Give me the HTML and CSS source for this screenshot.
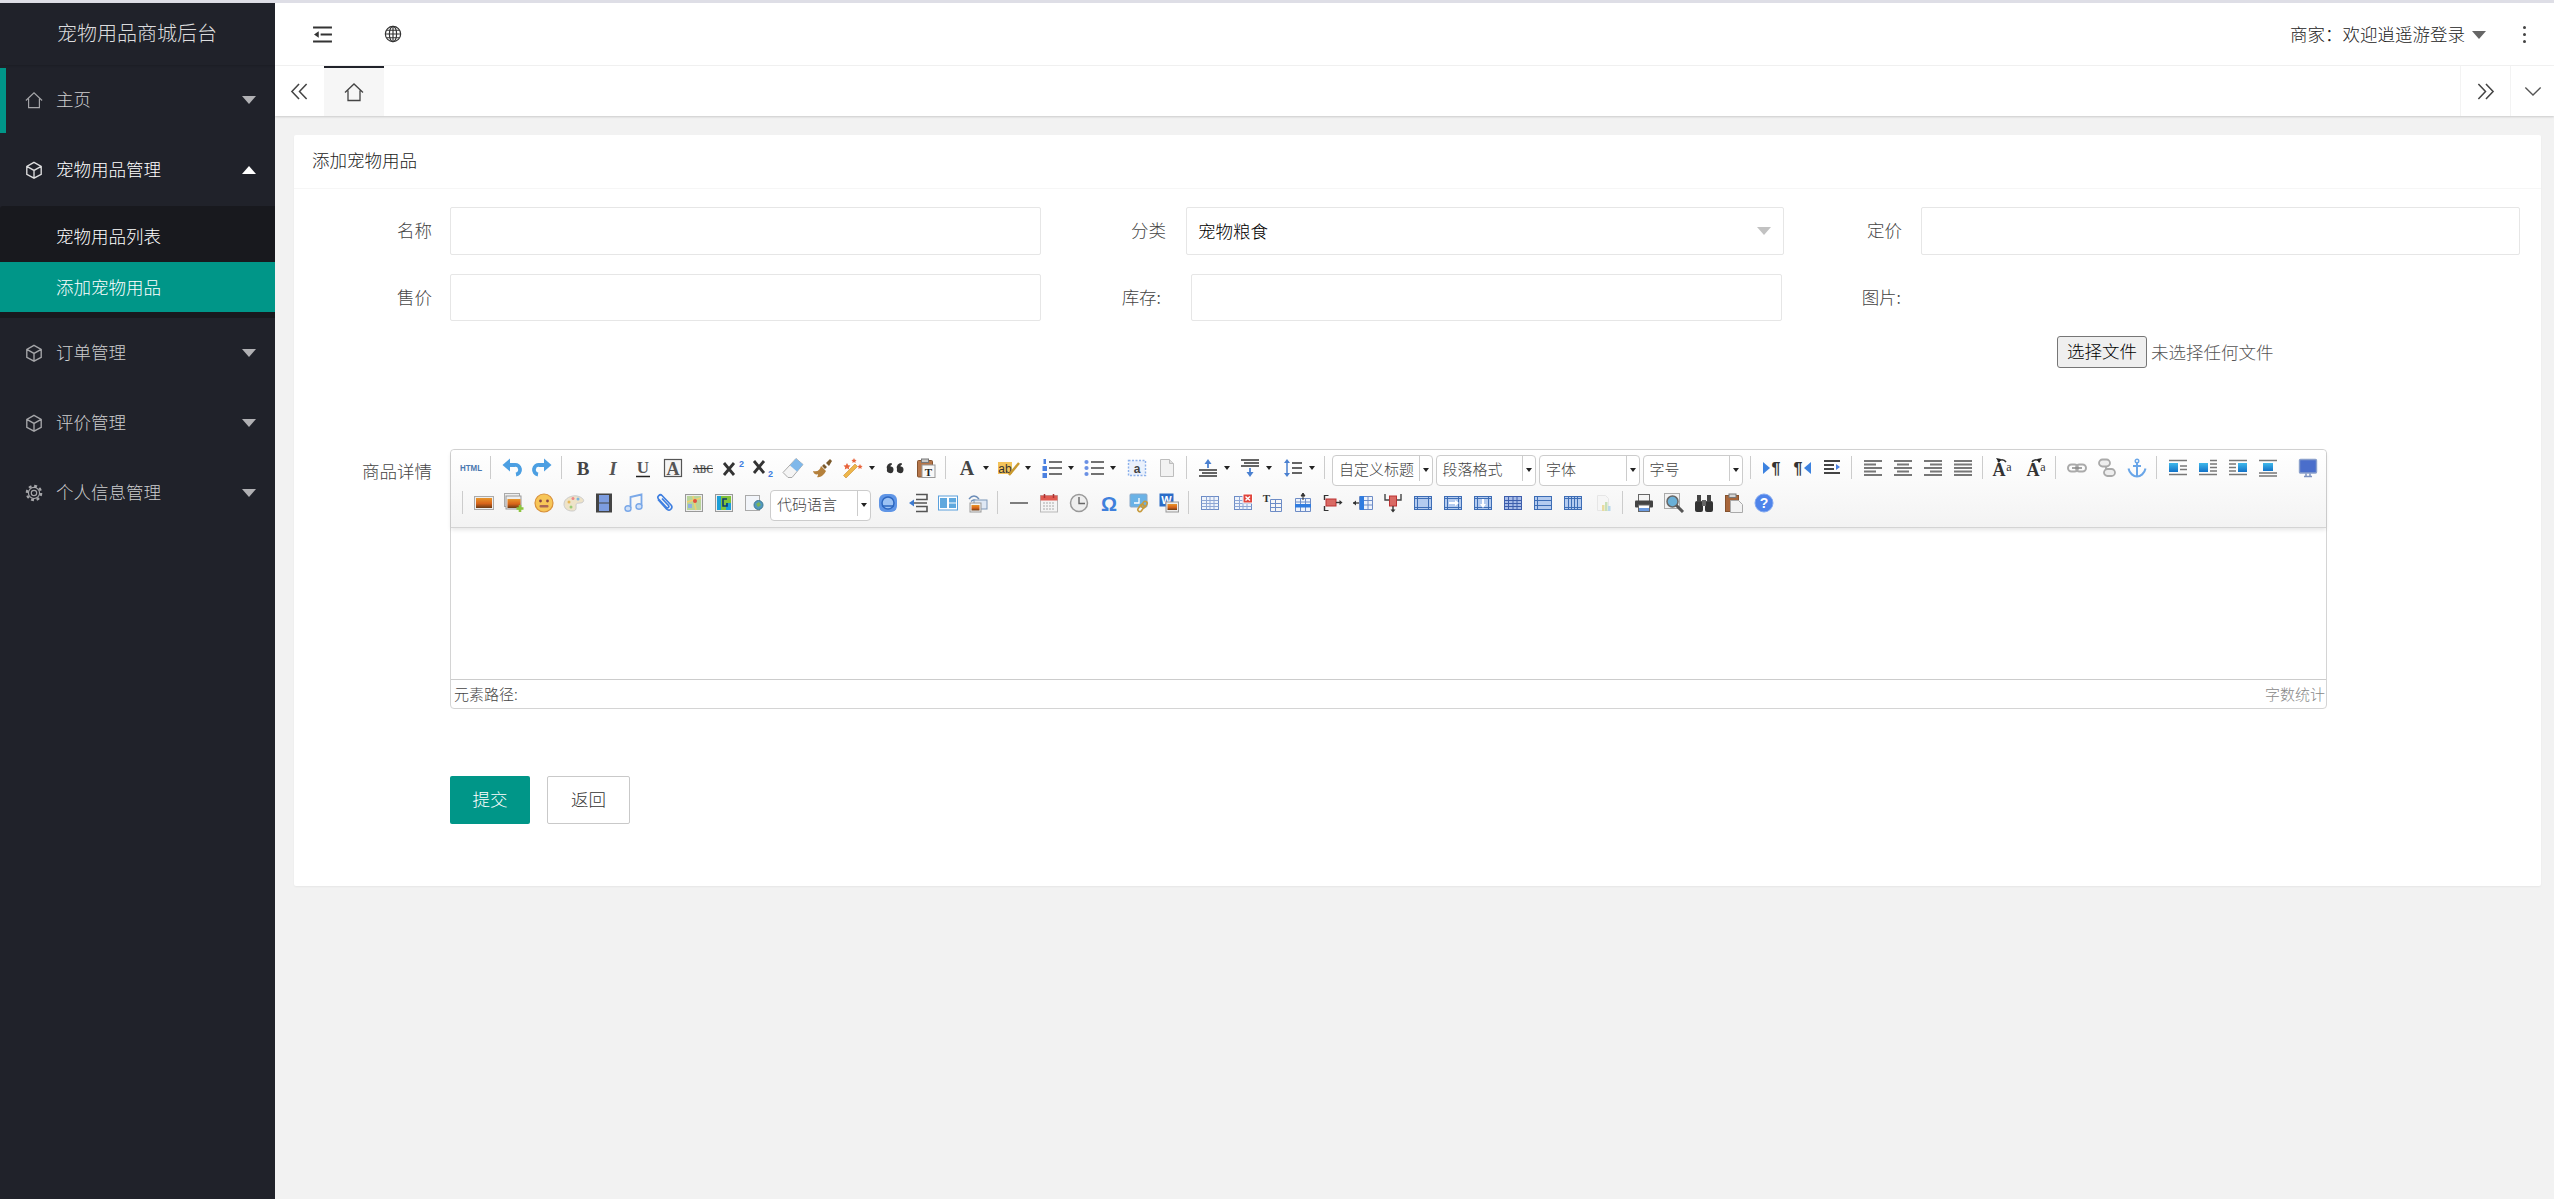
FILE: index.html
```html
<!DOCTYPE html>
<html lang="zh-CN">
<head>
<meta charset="utf-8">
<title>宠物用品商城后台</title>
<link rel="stylesheet" href="styles.css">
</head>
<body>
<svg class="sprite" xmlns="http://www.w3.org/2000/svg">
<defs>
<linearGradient id="sun" x1="0" y1="0" x2="0" y2="1"><stop offset="0" stop-color="#e8962a"/><stop offset=".55" stop-color="#d8641a"/><stop offset="1" stop-color="#6a3a14"/></linearGradient>
<linearGradient id="sky" x1="0" y1="0" x2="0" y2="1"><stop offset="0" stop-color="#3fb8ea"/><stop offset="1" stop-color="#1272c8"/></linearGradient>
<g id="gr"><rect x="1.5" y="3.5" width="17" height="13" fill="#eef3fb" stroke="#6d8cc6"/><path d="M1.5 7.5h17M1.5 10.500h17M1.5 13.500h17M6.500 3.500v13M10 3.500v13M14 3.500v13" stroke="#8ea6d4" fill="none"/></g>
<g id="blue"><rect x="1.5" y="3.5" width="17" height="13" fill="#b4cbef" stroke="#3d6db5"/><path d="M1.5 5.500h17M1.5 14.500h17M4.500 3.500v13M15.500 3.500v13" stroke="#3d6db5" fill="none"/></g>
</defs>
<symbol id="home" viewBox="0 0 20 20"><path d="M1 10.500 10 2l9 8.500M4 8.500V18.500h12V8.500" fill="none" stroke="currentColor" stroke-width="1.300"/></symbol>
<symbol id="cube" viewBox="0 0 20 20"><path d="M10 1.500 18 6v8.800l-8 4.300-8-4.300V6zM2.500 6.200 10 10.500l7.500-4.300M10 10.500v8.500" fill="none" stroke="currentColor" stroke-width="1.500"/></symbol>
<symbol id="gear" viewBox="0 0 20 20"><circle cx="10" cy="10" r="3" fill="none" stroke="currentColor" stroke-width="1.300"/><circle cx="10" cy="10" r="6.200" fill="none" stroke="currentColor" stroke-width="1.300"/><circle cx="10" cy="10" r="8" fill="none" stroke="currentColor" stroke-width="2.400" stroke-dasharray="3.200 3.080"/></symbol>
<symbol id="fold" viewBox="0 0 20 18"><path d="M0 1.500h20M8 9h12M0 16.500h20" stroke="#333" stroke-width="2.200" fill="none"/><path d="M1 9l5-3.500v7z" fill="#333"/></symbol>
<symbol id="globe" viewBox="0 0 20 20"><g fill="none" stroke="#333" stroke-width="1.300"><circle cx="10" cy="10" r="8.500"/><ellipse cx="10" cy="10" rx="4" ry="8.500"/><path d="M10 1.500v17M1.500 10h17M2.800 5.800h14.400M2.800 14.200h14.400"/></g></symbol>
<symbol id="dbl" viewBox="0 0 20 20"><path d="M9.500 2 2 10l7.500 8M17.500 2 10 10l7.500 8" fill="none" stroke="#444" stroke-width="1.600"/></symbol>
<symbol id="chev" viewBox="0 0 20 12"><path d="M1.500 1.500 10 10l8.500-8.500" fill="none" stroke="#555" stroke-width="1.500"/></symbol>

<symbol id="undo" viewBox="0 0 20 20"><path d="M6 7h6.500a4.700 4.700 0 0 1 1.500 9.500" fill="none" stroke="#4c9fe2" stroke-width="3.800"/><path d="M8 .5v13L.5 7z" fill="#4c9fe2"/></symbol>
<symbol id="redo" viewBox="0 0 20 20"><g transform="matrix(-1 0 0 1 20 0)"><path d="M6 7h6.500a4.700 4.700 0 0 1 1.500 9.500" fill="none" stroke="#4c9fe2" stroke-width="3.800"/><path d="M8 .5v13L.5 7z" fill="#4c9fe2"/></g></symbol>
<symbol id="eras" viewBox="0 0 20 20"><path d="M13 .5 20 6.500 9 19.500H5L0 14.500z" fill="#f4f4f4" stroke="#aaa"/><path d="M13 .5 20 6.500 14 13.500 7 7.500z" fill="#7fb8ea"/></symbol>
<symbol id="brush" viewBox="0 0 20 20"><path d="M0 13c5 1 7-1 8-5l5 5c-2 4-6 7-9 6 1-1 1-2 1-3-1 1-4 1-5-3z" fill="#b5813c"/><path d="M9 8l2-2 3 3-2 2zM13 5l4-4 2 2-3 5z" fill="#7b5a2c"/></symbol>
<symbol id="magic" viewBox="0 0 20 20"><path d="M3 20 .5 17.500 12 6l2.500 2.500z" fill="#eeb64a" stroke="#c98a2e" stroke-width=".6"/><path d="M4 5l1.200 2.200 2.300.3-1.700 1.700.4 2.300L4 10.300l-2.200 1.200.4-2.300L.5 7.500l2.300-.3zM11 0l.8 1.700 1.800.2-1.300 1.300.3 1.800L11 4.100l-1.600.9.300-1.800L8.400 1.900l1.800-.2zM17 6l.8 1.700 1.800.2-1.300 1.300.3 1.800-1.600-.9-1.600.9.300-1.800-1.300-1.300 1.800-.2z" fill="#e8643c"/></symbol>
<symbol id="quote" viewBox="0 0 20 20"><path d="M1 11a4.500 4.500 0 0 1 4.500-6l.5 1.500C5 7 4.500 7.500 4.500 8.500a3.300 3.300 0 1 1-3.500 2.500zM11 11a4.500 4.500 0 0 1 4.500-6l.5 1.500c-1 .5-1.500 1-1.500 2a3.300 3.300 0 1 1-3.500 2.500z" fill="#333"/></symbol>
<symbol id="ol" viewBox="0 0 20 20"><path d="M7 4h13M7 10h13M7 16h13" stroke="#444" stroke-width="1.500"/><rect x="1.500" y="1" width="2.500" height="5" fill="#4a80e0"/><rect x="0.500" y="8" width="4.500" height="5" fill="#4a80e0"/><rect x="0.500" y="15" width="4.500" height="5" fill="#4a80e0"/></symbol>
<symbol id="ul" viewBox="0 0 20 20"><path d="M7 4h13M7 10h13M7 16h13" stroke="#444" stroke-width="1.500"/><circle cx="2.500" cy="4" r="2.100" fill="#6a90e4"/><circle cx="2.500" cy="10" r="2.100" fill="#6a90e4"/><circle cx="2.500" cy="16" r="2.100" fill="#6a90e4"/></symbol>
<symbol id="page" viewBox="0 0 20 20"><path d="M3.500 1.500h9l4 4v13h-13z" fill="#f2f2f2" stroke="#bdbdbd"/><path d="M12.500 1.500v4h4" fill="#ddd" stroke="#bdbdbd"/></symbol>
<symbol id="rt" viewBox="0 0 20 20"><path d="M10 1 6.500 6h7z" fill="#4a80d0"/><path d="M10 5v5" stroke="#4a80d0" stroke-width="1.800"/><path d="M1 12h18M4 15h15M1 18h18" stroke="#333" stroke-width="1.500"/></symbol>
<symbol id="rb" viewBox="0 0 20 20"><path d="M1 2h18M4 5h15M1 8h18" stroke="#333" stroke-width="1.500"/><path d="M10 19l-3.500-5h7z" fill="#4a80d0"/><path d="M10 10v5" stroke="#4a80d0" stroke-width="1.800"/></symbol>
<symbol id="lh" viewBox="0 0 20 20"><path d="M4 1 1 5h6zM4 19l-3-4h6z" fill="#4a80d0"/><path d="M4 5v10" stroke="#4a80d0" stroke-width="1.500"/><path d="M9 5h10M9 10h10M9 15h10" stroke="#333" stroke-width="1.600"/></symbol>
<symbol id="ind" viewBox="0 0 20 20"><path d="M2 3h16M2 7h10M2 11h10M2 15h16" stroke="#444" stroke-width="1.800"/><path d="M14 6l4 3-4 3z" fill="#4a80e0"/></symbol>
<symbol id="al" viewBox="0 0 20 20"><path d="M1 3h18M1 6.500h12M1 10h18M1 13.500h12M1 17h18" stroke="#777" stroke-width="2"/></symbol>
<symbol id="ac" viewBox="0 0 20 20"><path d="M1 3h18M4 6.500h12M1 10h18M4 13.500h12M1 17h18" stroke="#777" stroke-width="2"/></symbol>
<symbol id="ar" viewBox="0 0 20 20"><path d="M1 3h18M7 6.500h12M1 10h18M7 13.500h12M1 17h18" stroke="#777" stroke-width="2"/></symbol>
<symbol id="aj" viewBox="0 0 20 20"><path d="M1 3h18M1 6.500h18M1 10h18M1 13.500h18M1 17h18" stroke="#777" stroke-width="2"/></symbol>
<symbol id="link" viewBox="0 0 20 20"><rect x="1" y="6.500" width="10" height="7" rx="3.500" fill="none" stroke="#aaa" stroke-width="2"/><rect x="9" y="6.500" width="10" height="7" rx="3.500" fill="none" stroke="#aaa" stroke-width="2"/><path d="M5 10h10" stroke="#888" stroke-width="1.500"/></symbol>
<symbol id="unlink" viewBox="0 0 20 20"><rect x="2" y="1.500" width="11" height="7" rx="3.500" fill="#eee" stroke="#aaa" stroke-width="1.800"/><rect x="7" y="11" width="11" height="7" rx="3.500" fill="#eee" stroke="#aaa" stroke-width="1.800"/><path d="M9 8v4" stroke="#aaa" stroke-width="1.800"/></symbol>
<symbol id="anchor" viewBox="0 0 20 20"><circle cx="10" cy="3" r="1.800" fill="none" stroke="#6aa6e8" stroke-width="1.400"/><path d="M10 5v13M6 8h8M1.500 10.500c1 5 5 8 8.500 8s7.500-3 8.500-8" fill="none" stroke="#6aa6e8" stroke-width="2"/></symbol>
<symbol id="fl" viewBox="0 0 20 20"><rect x="1" y="5" width="9" height="9" fill="url(#sky)"/><path d="M1 2.500h18M12 8h7M12 11.500h7M1 16.500h18" stroke="#777" stroke-width="1.400"/></symbol>
<symbol id="fr" viewBox="0 0 20 20"><rect x="1" y="5" width="9" height="9" fill="url(#sky)"/><path d="M12 2.500h7M12 6h7M12 9.500h7M12 13h7M1 16.500h18" stroke="#777" stroke-width="1.400"/></symbol>
<symbol id="fb" viewBox="0 0 20 20"><rect x="10" y="5" width="9" height="9" fill="url(#sky)"/><path d="M1 2.500h18M1 6h7M1 9.500h7M1 13h7M1 16.500h18" stroke="#777" stroke-width="1.400"/></symbol>
<symbol id="fn" viewBox="0 0 20 20"><rect x="5" y="5" width="10" height="8" fill="url(#sky)"/><path d="M1 2.500h18M1 15h18M1 18h18" stroke="#777" stroke-width="1.400"/></symbol>
<symbol id="mon" viewBox="0 0 20 20"><rect x="1.500" y="1.500" width="17" height="13.500" rx="1" fill="#4a6ecb" stroke="#8aa0cc" stroke-width="1.400"/><path d="M6 18.500h8M8 15.500v3M12 15.500v3" stroke="#7d92c0" stroke-width="1.500"/></symbol>

<symbol id="img" viewBox="0 0 20 20"><rect x=".5" y="3.500" width="19" height="13" fill="#eee" stroke="#aaa"/><rect x="2" y="5" width="16" height="10" fill="url(#sun)"/></symbol>
<symbol id="mimg" viewBox="0 0 20 20"><rect x=".5" y=".5" width="15" height="13" fill="#eee" stroke="#aaa"/><rect x="2" y="3" width="15" height="13" fill="#eee" stroke="#999"/><rect x="3.500" y="6" width="13" height="9" fill="url(#sun)"/><path d="M16 12v7M12.500 15.500h7" stroke="#8cc63e" stroke-width="2.600"/></symbol>
<symbol id="emo" viewBox="0 0 20 20"><circle cx="10" cy="10" r="9" fill="#f7c658" stroke="#d9913a" stroke-width="1.200"/><circle cx="6.500" cy="8" r="1.400" fill="#844"/><circle cx="13.500" cy="8" r="1.400" fill="#844"/><rect x="5.500" y="12" width="9" height="2.500" rx="1" fill="#a65" /></symbol>
<symbol id="pal" viewBox="0 0 20 20"><path d="M0 11C0 5 8 2 13 3s8 4 6 6-7 0-7 3 1 6-4 6-8-3-8-7z" fill="#eee3c8" stroke="#ccc"/><circle cx="14" cy="6" r="1.500" fill="#7bb6e0"/><circle cx="9" cy="5.500" r="1.500" fill="#e88"/><circle cx="5" cy="9" r="1.500" fill="#e6b85a"/><circle cx="7" cy="14" r="1.500" fill="#9c7"/></symbol>
<symbol id="film" viewBox="0 0 20 20"><rect x="2" y=".5" width="16" height="19" fill="#444"/><rect x="5" y="2" width="10" height="7.500" fill="#7d9de0"/><rect x="5" y="10.500" width="10" height="7.500" fill="#7d9de0"/></symbol>
<symbol id="mus" viewBox="0 0 20 20"><path d="M6.500 15V4l11-2.500V13" fill="none" stroke="#7aa8e8" stroke-width="1.800"/><ellipse cx="4" cy="15.500" rx="3" ry="2.800" fill="#cfe0f8" stroke="#7aa8e8" stroke-width="1.400"/><ellipse cx="15" cy="13.500" rx="3" ry="2.800" fill="#cfe0f8" stroke="#7aa8e8" stroke-width="1.400"/></symbol>
<symbol id="clip" viewBox="0 0 20 20"><path d="M4 6.500 12.500 16c3 3 7-1 4.500-4L8 2.500C6 .5 2.500 3.500 4.500 6l8 8.500c1.500 1 3-.5 2-2L8 5.500" fill="none" stroke="#3f7fe0" stroke-width="1.700"/></symbol>
<symbol id="map" viewBox="0 0 20 20"><rect x="1.500" y="1.500" width="17" height="17" fill="#eee" stroke="#999"/><rect x="3" y="3" width="14" height="14" fill="#b8d49a"/><path d="M3 9l14-4M9 3l3 14" stroke="#f0d070" stroke-width="1.600"/><circle cx="11" cy="8" r="2" fill="#e05040"/><rect x="4" y="11" width="4" height="4" fill="#90b0e0"/></symbol>
<symbol id="gmap" viewBox="0 0 20 20"><rect x="1.500" y="1.500" width="17" height="17" fill="#eee" stroke="#999"/><rect x="3" y="3" width="14" height="14" fill="#1b9fd8"/><path d="M7 3h10v7H12v7H7z" fill="#7fc23a"/><path d="M13 6H9v7h4v-3" fill="none" stroke="#103a70" stroke-width="1.600"/></symbol>
<symbol id="frame" viewBox="0 0 20 20"><rect x="1.500" y="2.500" width="14" height="15" fill="#f2f5fa" stroke="#aaa"/><circle cx="14.500" cy="12" r="4.500" fill="#5098c0" stroke="#3f7a90"/><path d="M12 11l3-2 2 3-3 2z" fill="#7bb457"/></symbol>
<symbol id="app" viewBox="0 0 20 20"><rect x="1" y="1" width="18" height="18" rx="6" fill="#5f95e6"/><circle cx="10" cy="10" r="6" fill="#9cc2f4" stroke="#2d67c0" stroke-width="1.500"/><path d="M4 13h12" stroke="#2d67c0" stroke-width="1.500"/></symbol>
<symbol id="pb" viewBox="0 0 20 20"><path d="M8 1.500h11v5H8M8 18.500h11v-5H8M5 10h14" fill="none" stroke="#555" stroke-width="1.600"/><path d="M1 10l5-3.500v7z" fill="#3c7ad0"/></symbol>
<symbol id="tpl" viewBox="0 0 20 20"><rect x=".5" y="3" width="19" height="14" fill="#fff" stroke="#5aa0dc"/><rect x="2" y="5" width="7" height="10" fill="#5fa8de"/><rect x="11" y="5" width="7" height="4.500" fill="#5fa8de"/><rect x="11" y="10.500" width="7" height="4.500" fill="#5fa8de"/></symbol>
<symbol id="bg" viewBox="0 0 20 20"><path d="M1 6c3-4 7-4 10 0M3 8.500c2-2 4-2 6 0" fill="none" stroke="#6a8cb8" stroke-width="1.300"/><rect x="6" y="7" width="13" height="9" fill="#dfe8f4" stroke="#7d97b8"/><rect x="2" y="10" width="11" height="9" fill="#f4f4f4" stroke="#999"/><rect x="3.500" y="12" width="8" height="5.500" fill="url(#sun)"/></symbol>
<symbol id="hr" viewBox="0 0 20 20"><path d="M1 10h18" stroke="#555" stroke-width="1.500"/></symbol>
<symbol id="cal" viewBox="0 0 20 20"><rect x="1.500" y="2.500" width="17" height="16.500" fill="#f4f4f4" stroke="#b9b9b9"/><rect x="1.500" y="2.500" width="17" height="5" fill="#e05a50"/><path d="M5.500 1v4M14.500 1v4" stroke="#a33" stroke-width="1.500"/><path d="M4 10h12M4 13h12M4 16h12" stroke="#aaa" stroke-dasharray="2 1"/></symbol>
<symbol id="clk" viewBox="0 0 20 20"><circle cx="10" cy="10" r="8.500" fill="#eee" stroke="#999" stroke-width="1.500"/><path d="M10 4v6.500H16" fill="none" stroke="#666" stroke-width="1.400"/></symbol>
<symbol id="wimg" viewBox="0 0 20 20"><rect x="1" y="1" width="17" height="13" rx="1" fill="#6ab2e6" stroke="#8aa8c8"/><path d="M5 10h5V5" fill="none" stroke="#fff" stroke-width="1.300"/><rect x="10" y="11" width="4" height="8" rx="2" transform="rotate(35 12 15)" fill="none" stroke="#c79a3c" stroke-width="1.600"/><rect x="13" y="8" width="4" height="7" rx="2" transform="rotate(35 15 12)" fill="none" stroke="#c79a3c" stroke-width="1.600"/></symbol>
<symbol id="t1" viewBox="0 0 20 20"><use href="#gr"/></symbol>
<symbol id="t2" viewBox="0 0 20 20"><use href="#gr"/><rect x="10" y="1" width="9.500" height="9" fill="#e0453c" stroke="#fff"/><path d="M12.500 3.500l4.500 4M17 3.500l-4.500 4" stroke="#fff" stroke-width="1.500"/></symbol>
<symbol id="t4" viewBox="0 0 20 20"><path d="M2.500 5.500h15v13h-15zM2.500 9h15M7.500 5.500v13M12.500 5.500v13" fill="#eef3fb" stroke="#6d8cc6"/><rect x="2" y="11" width="16" height="3.500" fill="#2f7ce0"/><path d="M10 0 8 3h4zM10 2v5" stroke="#333" fill="#333"/></symbol>
<symbol id="t5" viewBox="0 0 20 20"><path d="M1.500 2v5M1.500 13v5" stroke="#333" stroke-width="1.400"/><path d="M1.500 2.500h4M1.500 17.500h4" stroke="#333"/><rect x="3" y="6" width="10" height="7" fill="#d96a64" stroke="#b33"/><path d="M13 9.500h5" stroke="#333" stroke-width="1.400"/><path d="M19.500 9.500l-3-2.500v5z" fill="#333"/></symbol>
<symbol id="t6" viewBox="0 0 20 20"><path d="M6.500 3.500h13v13h-13zM6.500 7.500h13M6.500 12h13M15 3.500v13" fill="#eef3fb" stroke="#6d8cc6"/><rect x="7" y="3" width="4" height="14" fill="#2f7ce0"/><path d="M0 10h6" stroke="#333" stroke-width="1.300"/><path d="M0 10l3-2.500v5z" fill="#333"/></symbol>
<symbol id="t7" viewBox="0 0 20 20"><path d="M2 1v6h16V1" fill="none" stroke="#444" stroke-width="1.400"/><rect x="6.500" y="3" width="7" height="10" fill="#d96a64" stroke="#b33"/><path d="M10 13v5" stroke="#333" stroke-width="1.400"/><path d="M10 19.500l-2.500-3h5z" fill="#333"/></symbol>
<symbol id="t8" viewBox="0 0 20 20"><use href="#blue"/></symbol>
<symbol id="t9" viewBox="0 0 20 20"><use href="#blue"/><path d="M6 10h7" stroke="#fff" stroke-width="2"/><path d="M16 10l-4-3v6z" fill="#fff"/></symbol>
<symbol id="t10" viewBox="0 0 20 20"><use href="#blue"/><path d="M10 6v6" stroke="#fff" stroke-width="2"/><path d="M10 15l-3-4h6z" fill="#fff"/></symbol>
<symbol id="t11" viewBox="0 0 20 20"><rect x="1.500" y="3.500" width="17" height="13" fill="#a8bce8" stroke="#3d5eac"/><path d="M1.500 7.500h17M1.500 10.500h17M1.500 13.500h17M5.500 3.500v13M10 3.500v13M14 3.500v13" stroke="#3d5eac" fill="none"/></symbol>
<symbol id="t12" viewBox="0 0 20 20"><rect x="1.500" y="3.500" width="17" height="13" fill="#b4cbef" stroke="#3d6db5"/><path d="M1.500 7.500h17M1.500 12.500h17M4.500 3.500v13" stroke="#3d6db5" fill="none"/></symbol>
<symbol id="t13" viewBox="0 0 20 20"><rect x="1.500" y="3.500" width="17" height="13" fill="#b4cbef" stroke="#3d6db5"/><path d="M5.500 3.500v13M8.500 3.500v13M11.500 3.500v13M14.500 3.500v13M1.500 5.500h17M1.500 14.500h17" stroke="#3d6db5" fill="none"/></symbol>
<symbol id="t14" viewBox="0 0 20 20"><path d="M4.500 2.500h8l3 3v12h-11z" fill="#f6f6f6" stroke="#e6e6e6"/><rect x="9" y="12" width="2.500" height="6" fill="#e8dca0"/><rect x="12" y="9" width="2.500" height="9" fill="#c9e0b8"/><rect x="15" y="13" width="2.500" height="5" fill="#b8d8ec"/></symbol>
<symbol id="prt" viewBox="0 0 20 20"><rect x="4.500" y="1.500" width="11" height="7" fill="#f4f4f4" stroke="#666"/><rect x="1" y="7.500" width="18" height="7" rx="1" fill="#444"/><rect x="4.500" y="12" width="11" height="6.500" fill="#fff" stroke="#666"/><rect x="5" y="15" width="10" height="3" fill="#6a9ae0"/></symbol>
<symbol id="pre" viewBox="0 0 20 20"><rect x=".5" y=".5" width="15" height="15" fill="#f2f2f2" stroke="#aaa"/><circle cx="8.500" cy="8.500" r="5.500" fill="#6ab0d8" stroke="#666" stroke-width="1.500"/><path d="M12.500 12.500l6.500 6.500" stroke="#555" stroke-width="3"/></symbol>
<symbol id="find" viewBox="0 0 20 20"><rect x="1" y="8" width="8" height="11" rx="2" fill="#333"/><rect x="11" y="8" width="8" height="11" rx="2" fill="#333"/><rect x="3" y="2" width="4" height="7" fill="#444"/><rect x="13" y="2" width="4" height="7" fill="#444"/><rect x="8" y="7" width="4" height="6" fill="#666"/></symbol>
<symbol id="pst" viewBox="0 0 20 20"><rect x="1.500" y="2.500" width="13" height="16" fill="#a8663a" stroke="#84522e"/><rect x="5" y="1" width="7" height="3.500" fill="#d5d5d5" stroke="#777"/><path d="M6.500 7.500h8l4 4v8h-12z" fill="#f2f2f2" stroke="#aaa"/></symbol>
</svg>

<div class="topline"></div>
<div class="shell">
  <aside class="side">
    <div class="logo">宠物用品商城后台</div>
    <nav class="menu">
      <a class="mi mi-cur"><svg class="mic"><use href="#home"/></svg><span>主页</span><i class="tri"></i></a>
      <a class="mi mi-open"><svg class="mic"><use href="#cube"/></svg><span>宠物用品管理</span><i class="tri tri-up"></i></a>
      <div class="submenu">
        <a class="si si-first">宠物用品列表</a>
        <a class="si si-on">添加宠物用品</a>
      </div>
      <a class="mi"><svg class="mic"><use href="#cube"/></svg><span>订单管理</span><i class="tri"></i></a>
      <a class="mi"><svg class="mic"><use href="#cube"/></svg><span>评价管理</span><i class="tri"></i></a>
      <a class="mi"><svg class="mic"><use href="#gear"/></svg><span>个人信息管理</span><i class="tri"></i></a>
    </nav>
  </aside>
  <main class="main">
    <header class="hdr">
      <svg class="h-fold"><use href="#fold"/></svg>
      <svg class="h-globe"><use href="#globe"/></svg>
      <div class="user">商家：欢迎逍遥游登录<i class="tri tri-dark"></i></div>
      <div class="dots"><b></b><b></b><b></b></div>
    </header>
    <div class="tabs">
      <div class="t-btn t-left"><svg class="t-dbl"><use href="#dbl"/></svg></div>
      <div class="t-tab"><svg class="t-home"><use href="#home"/></svg></div>
      <div class="t-btn t-r1"><svg class="t-dbl t-flip"><use href="#dbl"/></svg></div>
      <div class="t-btn t-r2"><svg class="t-chev"><use href="#chev"/></svg></div>
    </div>
    <div class="content">
      <section class="card">
        <div class="card-h">添加宠物用品</div>
        <div class="card-b">
          <div class="row">
            <label class="lb lb-a">名称</label><input class="ipt ipt-a">
            <label class="lb lb-b">分类</label>
            <div class="ipt sel"><span>宠物粮食</span><i class="sel-tri"></i></div>
            <label class="lb lb-c">定价</label><input class="ipt ipt-c">
          </div>
          <div class="row row2">
            <label class="lb lb-a">售价</label><input class="ipt ipt-a">
            <label class="lb lb-d">库存:</label><input class="ipt ipt-d">
            <label class="lb lb-e">图片:</label>
          </div>
          <div class="filerow"><button class="fbtn" type="button">选择文件</button><span class="fname">未选择任何文件</span></div>

          <div class="edrow">
            <label class="lb lb-a lb-ed">商品详情</label>
            <div class="ed">
              <div class="tb">
                <div class="tr">
                  <svg class="i" viewBox="0 0 20 20"><text x="10" y="13" text-anchor="middle" textLength="22" lengthAdjust="spacingAndGlyphs" class="st" font-size="8.5" font-weight="700" fill="#4a78b0">HTML</text></svg><s class="sp"></s>
                  <svg class="i"><use href="#undo"/></svg><svg class="i"><use href="#redo"/></svg><s class="sp"></s>
                  <svg class="i" viewBox="0 0 20 20"><text x="10" y="16.500" text-anchor="middle" class="se" font-size="19" font-weight="700" fill="#444">B</text></svg>
                  <svg class="i" viewBox="0 0 20 20"><text x="10" y="16.500" text-anchor="middle" class="se" font-size="19" font-weight="700" font-style="italic" fill="#555">I</text></svg>
                  <svg class="i" viewBox="0 0 20 20"><text x="10" y="14.500" text-anchor="middle" class="se" font-size="17" font-weight="700" fill="#555">U</text><path d="M3 18.500h14" stroke="#222" stroke-width="1.500"/></svg>
                  <svg class="i" viewBox="0 0 20 20"><rect x="1.500" y="1.500" width="17" height="17" fill="#f4f4f4" stroke="#555" stroke-width="1.200"/><text x="10" y="16.500" text-anchor="middle" class="se" font-size="18" font-weight="700" fill="#555">A</text></svg>
                  <svg class="i" viewBox="0 0 20 20"><text x="10" y="14.500" text-anchor="middle" textLength="20" lengthAdjust="spacingAndGlyphs" class="se" font-size="12" font-weight="700" fill="#666">ABC</text><path d="M0 10.500h20" stroke="#333"/></svg>
                  <svg class="i" viewBox="0 0 20 20"><path d="M1 5l10 12M11 5 1 17" stroke="#333" stroke-width="2.800" fill="none"/><text x="16" y="9" class="st" font-size="9" font-weight="700" fill="#3f7ce0">2</text></svg>
                  <svg class="i" viewBox="0 0 20 20"><path d="M1 3l10 12M11 3 1 15" stroke="#333" stroke-width="2.800" fill="none"/><text x="15" y="19" class="st" font-size="9" font-weight="700" fill="#3f7ce0">2</text></svg>
                  <svg class="i"><use href="#eras"/></svg><svg class="i"><use href="#brush"/></svg>
                  <span class="spl"><svg class="i"><use href="#magic"/></svg><i class="car"></i></span>
                  <svg class="i"><use href="#quote"/></svg>
                  <svg class="i" viewBox="0 0 20 20"><rect x="1.500" y="2.500" width="15" height="16.500" rx="1" fill="#b5764a" stroke="#84522e"/><rect x="5.500" y="1" width="7" height="3.500" fill="#c8c8c8" stroke="#777"/><rect x="6" y="7" width="13" height="12.500" fill="#f8f8f8" stroke="#999"/><text x="12.500" y="17.500" text-anchor="middle" class="se" font-size="11" font-weight="700" fill="#222">T</text></svg><s class="sp"></s>
                  <span class="spl"><svg class="i" viewBox="0 0 20 20"><text x="10" y="17" text-anchor="middle" class="se" font-size="20" font-weight="700" fill="#444">A</text></svg><i class="car"></i></span>
                  <span class="spl"><svg class="i" viewBox="0 0 20 20"><rect x="-1" y="4" width="14" height="12" fill="#f3c35a"/><text x="6" y="14.500" text-anchor="middle" class="st" font-size="12" fill="#333">ab</text><path d="M10 17 20 5" stroke="#c9992f" stroke-width="2.500"/></svg><i class="car"></i></span>
                  <span class="spl"><svg class="i"><use href="#ol"/></svg><i class="car"></i></span>
                  <span class="spl"><svg class="i"><use href="#ul"/></svg><i class="car"></i></span>
                  <svg class="i" viewBox="0 0 20 20"><rect x="1.500" y="2.500" width="17" height="15" fill="#eaf1fc" stroke="#8cb0ea" stroke-dasharray="2 1.500" stroke-width="1.400"/><text x="10" y="14.500" text-anchor="middle" class="st" font-size="12" font-weight="700" fill="#444">a</text></svg>
                  <svg class="i"><use href="#page"/></svg><s class="sp"></s>
                  <span class="spl"><svg class="i"><use href="#rt"/></svg><i class="car"></i></span>
                  <span class="spl"><svg class="i"><use href="#rb"/></svg><i class="car"></i></span>
                  <span class="spl"><svg class="i"><use href="#lh"/></svg><i class="car"></i></span><s class="sp"></s>
                  <div class="cb cb-first"><span class="cb-t">自定义标题</span><i class="cb-a"><i class="car"></i></i></div>
                  <div class="cb"><span class="cb-t">段落格式</span><i class="cb-a"><i class="car"></i></i></div>
                  <div class="cb"><span class="cb-t">字体</span><i class="cb-a"><i class="car"></i></i></div>
                  <div class="cb"><span class="cb-t">字号</span><i class="cb-a"><i class="car"></i></i></div><s class="sp"></s>
                  <svg class="i" viewBox="0 0 20 20"><path d="M1 4l7 6-7 6z" fill="#3c82e0"/><text x="14" y="16" text-anchor="middle" class="st" font-size="16" font-weight="700" fill="#333">¶</text></svg>
                  <svg class="i" viewBox="0 0 20 20"><path d="M19 4l-7 6 7 6z" fill="#3c82e0"/><text x="6" y="16" text-anchor="middle" class="st" font-size="16" font-weight="700" fill="#333">¶</text></svg>
                  <svg class="i"><use href="#ind"/></svg><s class="sp"></s>
                  <svg class="i"><use href="#al"/></svg><svg class="i"><use href="#ac"/></svg><svg class="i"><use href="#ar"/></svg><svg class="i"><use href="#aj"/></svg><s class="sp sp-n"></s>
                  <svg class="i i-tall" viewBox="0 -3 20 26"><text x="7" y="18" text-anchor="middle" class="se" font-size="18" font-weight="700" fill="#333">A</text><text x="17" y="13" text-anchor="middle" class="se" font-size="12" fill="#333">a</text><path d="M6 4c2-3 6-3 8 0" fill="none" stroke="#333" stroke-width="1.500"/><path d="M4 0l5 1-2 4z" fill="#222"/></svg>
                  <svg class="i i-tall i-gap" viewBox="0 -3 20 26"><text x="7" y="18" text-anchor="middle" class="se" font-size="18" font-weight="700" fill="#333">A</text><text x="17" y="13" text-anchor="middle" class="se" font-size="12" fill="#333">a</text><path d="M6 4c2-3 6-3 8 0" fill="none" stroke="#333" stroke-width="1.500"/><path d="M16 0l-5 1 2 4z" fill="#222"/></svg><s class="sp"></s>
                  <svg class="i"><use href="#link"/></svg><svg class="i"><use href="#unlink"/></svg><svg class="i"><use href="#anchor"/></svg><s class="sp"></s>
                  <svg class="i"><use href="#fl"/></svg><svg class="i"><use href="#fr"/></svg><svg class="i"><use href="#fb"/></svg><svg class="i"><use href="#fn"/></svg>
                  <svg class="i i-far"><use href="#mon"/></svg>
                </div>
                <div class="tr">
                  <s class="sp sp-s"></s>
                  <svg class="i"><use href="#img"/></svg><svg class="i"><use href="#mimg"/></svg><svg class="i"><use href="#emo"/></svg><svg class="i"><use href="#pal"/></svg><svg class="i"><use href="#film"/></svg><svg class="i"><use href="#mus"/></svg><svg class="i"><use href="#clip"/></svg><svg class="i"><use href="#map"/></svg><svg class="i"><use href="#gmap"/></svg><svg class="i"><use href="#frame"/></svg>
                  <div class="cb cb-code"><span class="cb-t">代码语言</span><i class="cb-a"><i class="car"></i></i></div>
                  <svg class="i"><use href="#app"/></svg><svg class="i"><use href="#pb"/></svg><svg class="i"><use href="#tpl"/></svg><svg class="i"><use href="#bg"/></svg><s class="sp"></s>
                  <svg class="i"><use href="#hr"/></svg><svg class="i"><use href="#cal"/></svg><svg class="i"><use href="#clk"/></svg>
                  <svg class="i" viewBox="0 0 20 20"><text x="10" y="17.500" text-anchor="middle" class="st" font-size="20" font-weight="700" fill="#3f80dc">Ω</text></svg>
                  <svg class="i"><use href="#wimg"/></svg>
                  <svg class="i" viewBox="0 0 20 20"><rect x=".5" y=".5" width="14" height="13" fill="#2a6cc8"/><text x="7.500" y="11" text-anchor="middle" class="st" font-size="11" font-weight="700" fill="#fff">W</text><rect x="7" y="9" width="12.500" height="10" fill="#eee" stroke="#999"/><rect x="8.500" y="11" width="9.500" height="6" fill="url(#sun)"/></svg><s class="sp"></s>
                  <svg class="i"><use href="#t1"/></svg><svg class="i i-t2"><use href="#t2"/></svg>
                  <svg class="i" viewBox="0 0 20 20"><text x="3.500" y="9" text-anchor="middle" class="se" font-size="11" font-weight="700" fill="#333">T</text><path d="M7.500 6.500h11v12h-11zM7.500 10.500h11M7.500 14.500h11M12.500 6.500v12" fill="none" stroke="#6d8cc6"/></svg>
                  <svg class="i"><use href="#t4"/></svg><svg class="i"><use href="#t5"/></svg><svg class="i"><use href="#t6"/></svg><svg class="i"><use href="#t7"/></svg><svg class="i"><use href="#t8"/></svg><svg class="i"><use href="#t9"/></svg><svg class="i"><use href="#t10"/></svg><svg class="i"><use href="#t11"/></svg><svg class="i"><use href="#t12"/></svg><svg class="i"><use href="#t13"/></svg><svg class="i"><use href="#t14"/></svg><s class="sp"></s>
                  <svg class="i"><use href="#prt"/></svg><svg class="i"><use href="#pre"/></svg><svg class="i"><use href="#find"/></svg><svg class="i"><use href="#pst"/></svg>
                  <svg class="i" viewBox="0 0 20 20"><circle cx="10" cy="10" r="9" fill="#4f84ea" stroke="#82a8f0"/><text x="10" y="15" text-anchor="middle" class="st" font-size="14" font-weight="700" fill="#fff">?</text></svg>
                </div>
              </div>
              <div class="ed-body"></div>
              <div class="ed-foot"><span class="path">元素路径:</span><span class="count">字数统计</span></div>
            </div>
          </div>

          <div class="acts"><button class="btn btn-p" type="button">提交</button><button class="btn btn-o" type="button">返回</button></div>
        </div>
      </section>
    </div>
  </main>
</div>
</body>
</html>
```

FILE: styles.css
```css
* { box-sizing: border-box; }
html, body { margin: 0; height: 100%; overflow: hidden; }
body { font-family: "Noto Sans CJK SC", "Liberation Sans", sans-serif; font-size: 17.5px; font-weight: 300; color: #555; background: #f2f2f2; display: flex; flex-direction: column; }
.sprite { position: absolute; width: 0; height: 0; overflow: hidden; }
.se { font-family: "Liberation Serif", serif; }
.st { font-family: "Liberation Sans", sans-serif; }
.topline { height: 3px; background: #dedee6; flex: none; }
.shell { flex: 1; display: flex; min-height: 0; }

/* sidebar */
.side { width: 275px; flex: none; background: #20222a; color: rgba(255,255,255,.78); }
.logo { height: 62px; padding-left: 57px; font-size: 20px; line-height: 60px; color: rgba(255,255,255,.85); box-shadow: 0 1px 2px rgba(0,0,0,.15); }
.mi { position: relative; height: 70px; display: flex; align-items: center; padding: 0 19px 0 25px; }
.mi span { margin-left: 13px; flex: 1; padding-bottom: 3px; }
.mic { width: 18px; height: 18px; flex: none; color: rgba(255,255,255,.6); }
.mi-cur::before { content: ""; position: absolute; left: 0; top: 3px; bottom: 2px; width: 6px; background: #009688; }
.mi-open { color: #fff; }
.mi-open .mic { color: rgba(255,255,255,.85); }
.tri { width: 0; height: 0; border-left: 7.5px solid transparent; border-right: 7.5px solid transparent; border-top: 8px solid rgba(255,255,255,.65); flex: none; }
.tri-up { border-top: 0; border-bottom: 8px solid #fff; }
.tri-dark { display: inline-block; border-top-color: #666; margin-left: 7px; vertical-align: 2px; }
.submenu { background: #18191e; height: 112px; color: #fff; margin-top: .5px; border-radius: 3px 0 0 0; }
.si { display: block; padding-left: 56px; }
.si-first { height: 56px; line-height: 60px; }
.si-on { height: 50px; line-height: 50px; background: #009688; }

/* header */
.main { flex: 1; min-width: 0; display: flex; flex-direction: column; }
.hdr { height: 63px; flex: none; background: #fff; border-bottom: 1px solid #f3f3f3; display: flex; align-items: center; color: #444; }
.h-fold { width: 19px; height: 17px; margin-left: 38px; }
.h-globe { width: 18px; height: 18px; margin-left: 52px; margin-right: auto; }
.user { font-size: 17.5px; color: #222; white-space: nowrap; padding-bottom: 2px; }
.dots { display: flex; flex-direction: column; gap: 4px; margin: 0 28px 0 37px; }
.dots b { width: 3px; height: 3px; background: #444; border-radius: 50%; }
.tabs { height: 50px; flex: none; background: #fff; display: flex; box-shadow: 0 1px 2px rgba(0,0,0,.16); position: relative; }
.t-btn { display: flex; align-items: center; justify-content: center; height: 100%; }
.t-left { width: 49px; }
.t-tab { width: 60px; background: #f6f6f6; border-top: 2px solid #20222a; display: flex; align-items: center; justify-content: center; }
.t-r1 { width: 50px; margin-left: auto; border-left: 1px solid #f3f3f3; }
.t-r2 { width: 44px; border-left: 1px solid #f3f3f3; }
.t-dbl { width: 19px; height: 19px; }
.t-flip { transform: scaleX(-1); }
.t-home { width: 20px; height: 20px; color: #444; }
.t-chev { width: 18px; height: 11px; }

/* card */
.content { flex: 1; padding: 19px 13px 0 19px; }
.card { background: #fff; border-radius: 2px; box-shadow: 0 1px 2px rgba(0,0,0,.05); }
.card-h { height: 54px; line-height: 50px; padding-left: 18px; border-bottom: 1px solid #f6f6f6; color: #222; }
.card-b { padding: 18px 0 62px; }
.row { display: flex; align-items: center; height: 48px; }
.row2 { margin-top: 19px; height: 47px; }
.lb { flex: none; text-align: right; color: #444; line-height: 24px; padding-bottom: 2px; }
.lb-a { width: 138px; margin-right: 18px; }
.lb-b { width: 125px; margin-right: 20px; }
.lb-c { width: 118px; margin-right: 19px; }
.lb-d { width: 120px; margin-right: 30px; }
.lb-e { width: 119px; }
.ipt { height: 100%; flex: none; border: 1px solid #e6e6e6; border-radius: 2px; background: #fff; font: inherit; outline: 0; padding: 0; }
.ipt-a { width: 591px; }
.ipt-c { width: 599px; }
.ipt-d { width: 591px; }
.sel { width: 598px; display: flex; align-items: center; justify-content: space-between; padding: 0 12px 0 11px; color: #000; }
.sel span { padding-bottom: 2px; }
.sel-tri { width: 0; height: 0; border-left: 7px solid transparent; border-right: 7px solid transparent; border-top: 8px solid #c2c2c2; }
.filerow { display: flex; align-items: center; height: 32px; margin: 15px 0 0 1763px; white-space: nowrap; }
.fbtn { width: 90px; height: 32px; padding: 0 0 3px; background: #efefef; border: 1px solid #767676; border-radius: 3px; font: inherit; color: #000; }
.fname { margin-left: 4px; color: #555; padding-bottom: 2px; }

/* editor */
.edrow { display: flex; align-items: flex-start; margin-top: 81px; }
.lb-ed { margin-top: 10px; }
.ed { width: 1877px; height: 260px; border: 1px solid #d4d4d4; border-radius: 4px; background: #fff; display: flex; flex-direction: column; }
.tb { height: 78px; flex: none; padding: 0 0 0 5px; background: linear-gradient(#fff, #f3f3f3); border-bottom: 1px solid #d4d4d4; box-shadow: 0 2px 4px rgba(0,0,0,.1); border-radius: 4px 4px 0 0; position: relative; }
.tr { height: 35px; display: flex; align-items: center; }
.i { width: 30px; height: 20px; flex: none; }
.i-tall { height: 26px; }
.i-gap { margin-left: 4px; }
.i-far { margin-left: 10px; }
.i-t2 { margin-left: 3px; }
.sp { width: 1px; height: 23px; background: #ccc; flex: none; margin: 0 6px 0 4px; }
.sp-n { margin-right: 4px; }
.sp-s { margin-left: 6px; }
.spl { width: 42.5px; flex: none; display: flex; align-items: center; }
.car { width: 0; height: 0; margin-left: 1px; border-left: 3.5px solid transparent; border-right: 3.5px solid transparent; border-top: 4px solid #222; flex: none; }
.cb { width: 100.5px; height: 31px; flex: none; margin: 5px 3px 0 0; background: #fff; border: 1px solid #ccc; border-radius: 4px; display: flex; align-items: stretch; font-size: 15px; color: #444; }
.cb-first { margin-left: 1px; }
.cb-code { margin: 5px 2px 0 1px; width: 101px; }
.cb-t { flex: 1; padding-left: 6px; line-height: 25px; overflow: hidden; white-space: nowrap; }
.cb-a { width: 13px; margin: 0 0 4px; border-left: 1px solid #ccc; display: flex; align-items: center; justify-content: center; flex: none; padding-top: 4px; }
.cb-a .car { margin: 0; }
.ed-body { flex: 1; }
.ed-foot { height: 29px; flex: none; border-top: 1px solid #ccc; display: flex; justify-content: space-between; font-size: 15px; line-height: 27px; padding: 0 1px 0 3px; color: #444; }
.count { color: #888; }

/* actions */
.acts { display: flex; margin: 67px 0 0 156px; gap: 17px; }
.btn { height: 48px; padding: 0 0 3px; font: inherit; border-radius: 2px; }
.btn-p { width: 80px; background: #009688; color: #fff; border: 0; }
.btn-o { width: 83px; background: #fff; color: #333; border: 1px solid #c9c9c9; }
```
